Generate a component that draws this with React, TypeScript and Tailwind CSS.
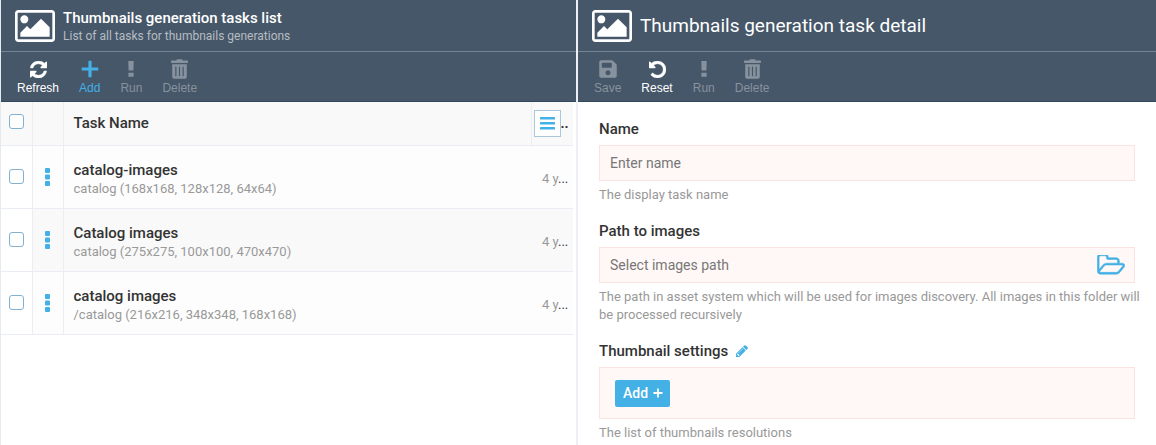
import { useState, type ReactNode } from "react";
import { FaSave, FaTrashAlt } from "react-icons/fa";

const PictureIcon = () => (
  <svg viewBox="-64 128 1920 1536" className="h-8 w-10 shrink-0" fill="currentColor" aria-hidden="true">
    <path d="M576 576q0 80-56 136t-136 56-136-56-56-136 56-136 136-56 136 56 56 136zm1024 384v448h-1408v-192l320-320 160 160 512-512zm96-704h-1600q-13 0-22.5 9.5t-9.5 22.5v1216q0 13 9.5 22.5t22.5 9.5h1600q13 0 22.5-9.5t9.5-22.5v-1216q0-13-9.5-22.5t-22.5-9.5zm160 32v1216q0 66-47 113t-113 47h-1600q-66 0-113-47t-47-113v-1216q0-66 47-113t113-47h1600q66 0 113 47t47 113z" />
  </svg>
);

const RefreshIcon = () => (
  <svg viewBox="128 128 1536 1536" className="size-[17px]" fill="currentColor" stroke="currentColor" strokeWidth="40" aria-hidden="true">
    <path d="M1639 1056q0 5-1 7-64 268-268 434.5t-478 166.5q-146 0-282.5-55t-243.5-157l-129 129q-19 19-45 19t-45-19-19-45v-448q0-26 19-45t45-19h448q26 0 45 19t19 45-19 45l-137 137q71 66 161 102t187 36q134 0 250-65t186-179q11-17 53-117 8-23 30-23h192q13 0 22.5 9.5t9.500 22.500zm25-800v448q0 26-19 45t-45 19h-448q-26 0-45-19t-19-45 19-45l138-138q-148-137-349-137-134 0-250 65t-186 179q-11 17-53 117-8 23-30 23h-199q-13 0-22.500-9.500t-9.500-22.500v-7q65-268 270-434.500t480-166.500q146 0 284 55.500t245 156.500l130-129q19-19 45-19t45 19 19 45z" />
  </svg>
);

const UndoIcon = () => (
  <svg viewBox="128 128 1536 1536" className="size-[17px]" fill="currentColor" stroke="currentColor" strokeWidth="40" aria-hidden="true">
    <path d="M1664 896q0 156-61 298t-164 245-245 164-298 61q-172 0-327-72.500t-264-204.500q-7-10-6.500-22.500t8.500-20.500l137-138q10-9 25-9 16 2 23 12 73 95 179 147t225 52q104 0 198.500-40.500t163.500-109.500 109.500-163.500 40.500-198.500-40.500-198.500-109.500-163.500-163.500-109.500-198.500-40.500q-98 0-188 35.500t-160 101.500l137 138q31 30 14 69-17 40-59 40h-448q-26 0-45-19t-19-45v-448q0-42 40-59 39-17 69 14l130 129q107-101 244.500-156.500t284.500-55.500q156 0 298 61t245 164 164 245 61 298z" />
  </svg>
);

const RunIcon = () => (
  <svg viewBox="0 0 6 16" className="h-4 w-[6px]" fill="currentColor" aria-hidden="true">
    <path d="M.3 0h5.400l-.3 9.500h-4.800zM.4 11.800h5.200v4h-5.200z" />
  </svg>
);

const PlusIcon = ({ className }: { className: string }) => (
  <svg viewBox="0 0 18 18" className={className} fill="currentColor" aria-hidden="true">
    <path d="M8 .7h2q.6 0 .6.6v6.100h6.100q.6 0 .6.6v2q0 .6-.6.6h-6.100v6.100q0 .6-.6.6h-2q-.6 0-.6-.6v-6.100h-6.100q-.6 0-.6-.6v-2q0-.6.6-.6h6.100v-6.100q0-.6.6-.6z" />
  </svg>
);

const FolderIcon = () => (
  <svg viewBox="44 236 1949 1320" className="h-5 w-7" fill="currentColor" stroke="currentColor" strokeWidth="36" aria-hidden="true">
    <path d="M1845 931q0-35-53-35h-1088q-40 0-85.5 21.500t-71.500 52.500l-294 363q-18 24-18 40 0 35 53 35h1088q40 0 86-22t71-53l294-363q18-22 18-39zm-1141-163h768v-160q0-40-28-68t-68-28h-576q-40 0-68-28t-28-68v-64q0-40-28-68t-68-28h-320q-40 0-68 28t-28 68v853l256-315q44-53 116-87.500t140-34.500zm1269 163q0 62-46 120l-295 363q-43 53-116 87.500t-140 34.500h-1088q-92 0-158-66t-66-158v-960q0-92 66-158t158-66h320q92 0 158 66t66 158v32h544q92 0 158 66t66 158v160h192q54 0 99 24.500t67 70.500q15 32 15 68z" />
  </svg>
);

const PencilIcon = () => (
  <svg viewBox="128 128 1536 1536" className="size-3" fill="currentColor" aria-hidden="true">
    <path d="M491 1536l91-91-235-235-91 91v107h128v128h107zm523-928q0-22-22-22-10 0-17 7l-542 542q-7 7-7 17 0 22 22 22 10 0 17-7l542-542q7-7 7-17zm-54-192l416 416-832 832h-416v-416zm683 96q0 53-37 90l-166 166-416-416 166-165q36-38 90-38 53 0 91 38l235 234q37 39 37 91z" />
  </svg>
);

const DotsIcon = () => (
  <svg viewBox="0 0 5 18" className="h-[18px] w-[5px]" fill="currentColor" aria-hidden="true">
    <rect width="5" height="5" rx="1" />
    <rect y="6.500" width="5" height="5" rx="1" />
    <rect y="13" width="5" height="5" rx="1" />
  </svg>
);

const MenuIcon = () => (
  <svg viewBox="0 0 15 13" className="h-[13px] w-[15px]" fill="currentColor" aria-hidden="true">
    <rect width="15" height="2.500" rx="0.500" />
    <rect y="5" width="15" height="2.500" rx="0.500" />
    <rect y="10" width="15" height="2.500" rx="0.500" />
  </svg>
);

type Tone = "normal" | "accent" | "disabled";
const tones: Record<Tone, string> = {
  normal: "text-white",
  accent: "text-[#43b0e6]",
  disabled: "text-[#87929e]",
};

function Tool({ label, icon, tone }: { label: string; icon: ReactNode; tone: Tone }) {
  return (
    <button
      type="button"
      disabled={tone === "disabled"}
      className={`flex flex-col items-center gap-px font-['Liberation_Sans',sans-serif] text-[12px] leading-4 ${tones[tone]}`}
    >
      <span className="flex h-5 items-center justify-center">{icon}</span>
      {label}
    </button>
  );
}

const deleteIcon = <FaTrashAlt className="h-5 w-[17px]" />;

function BladeHeader({ children, tools }: { children: ReactNode; tools: ReactNode }) {
  return (
    <header className="border-b border-[#34495e] bg-[#465769] text-white">
      <div className="flex h-[52px] items-center gap-2 border-b border-[#75828f] px-[14px]">
        <PictureIcon />
        {children}
      </div>
      <div className="flex h-[49px] items-start gap-5 px-4 pt-[7px]">{tools}</div>
    </header>
  );
}

function TickBox({ label }: { label: string }) {
  const [checked, setChecked] = useState(false);
  return (
    <input
      type="checkbox"
      aria-label={label}
      checked={checked}
      onChange={(e) => setChecked(e.target.checked)}
      className="block size-[15px] appearance-none rounded-[3px] border border-[#83b1d0] bg-white checked:bg-[#43b0e6]"
    />
  );
}

const tasks = [
  { name: "catalog-images", path: "catalog (168x168, 128x128, 64x64)" },
  { name: "Catalog images", path: "catalog (275x275, 100x100, 470x470)" },
  { name: "catalog images", path: "/catalog (216x216, 348x348, 168x168)" },
];

function TaskList() {
  return (
    <section className="flex min-w-0 flex-1 flex-col border-l border-[#e5eaf0]">
      <BladeHeader
        tools={
          <>
            <Tool label="Refresh" tone="normal" icon={<RefreshIcon />} />
            <Tool label="Add" tone="accent" icon={<PlusIcon className="size-[18px]" />} />
            <Tool label="Run" tone="disabled" icon={<RunIcon />} />
            <Tool label="Delete" tone="disabled" icon={deleteIcon} />
          </>
        }
      >
        <div>
          <h1 className="text-[15px] leading-5 font-medium">Thumbnails generation tasks list</h1>
          <p className="text-[12px] leading-4 text-[#b5bcc3]">List of all tasks for thumbnails generations</p>
        </div>
      </BladeHeader>
      <div className="pr-[3px]">
        <table className="w-full table-fixed border-collapse text-left">
          <thead className="bg-[#f9f9f9]">
            <tr className="h-[43px] border-b border-[#eaedf3]">
              <th className="w-[31px] border-r border-[#eaedf3] pb-1 pl-2"><TickBox label="Select all tasks" /></th>
              <th className="w-[31px] border-r border-[#eaedf3]" aria-label="Actions" />
              <th className="px-[10px] text-[15px] font-medium">Task Name</th>
              <th className="w-[42px] border-l border-[#eaedf3]">
                <div className="flex items-center pl-[2px]">
                  <button type="button" aria-label="Choose columns" className="flex size-[27px] shrink-0 items-center justify-center border border-[#a9c8dd] bg-white text-[#43b0e6]">
                    <MenuIcon />
                  </button>
                  <span className="text-[14px] font-bold">..</span>
                </div>
              </th>
            </tr>
          </thead>
          <tbody>
            {tasks.map((task) => (
              <tr key={task.name} className="h-[63px] border-b border-[#eaedf3] bg-[#fdfdfd] even:bg-[#f9f9f9]">
                <td className="border-r border-[#eaedf3] bg-white pl-2"><TickBox label={`Select ${task.name}`} /></td>
                <td className="border-r border-[#eaedf3] text-center text-[#43b0e6]">
                  <button type="button" aria-label={`Actions for ${task.name}`} className="align-middle"><DotsIcon /></button>
                </td>
                <td className="px-[10px] pt-[5px]">
                  <div className="text-[15px] leading-5 font-medium">{task.name}</div>
                  <div className="text-[13px] leading-[18px] text-[#999]">{task.path}</div>
                </td>
                <td className="pt-1 pl-[11px] text-[13px] text-[#333]"><span className="text-[#999]">4 y</span>...</td>
              </tr>
            ))}
          </tbody>
        </table>
      </div>
    </section>
  );
}

const hint = "mt-[5px] -mr-3 text-[13px] leading-[18px] text-[#999]";
const label = "text-[15px] leading-5 font-medium";
const box = "mt-[6px] border border-[#fbe3e0] bg-[#fff8f6]";

function TaskDetail() {
  const [name, setName] = useState("");
  const [path, setPath] = useState("");
  return (
    <section className="flex w-[calc(50%+2px)] shrink-0 flex-col border-l-2 border-[#edf1f5]">
      <BladeHeader
        tools={
          <>
            <Tool label="Save" tone="disabled" icon={<FaSave className="size-5" />} />
            <Tool label="Reset" tone="normal" icon={<UndoIcon />} />
            <Tool label="Run" tone="disabled" icon={<RunIcon />} />
            <Tool label="Delete" tone="disabled" icon={deleteIcon} />
          </>
        }
      >
        <h1 className="text-[19px] leading-7">Thumbnails generation task detail</h1>
      </BladeHeader>
      <form className="flex flex-col gap-[17px] px-[21px] pt-[17px]" onSubmit={(e) => e.preventDefault()}>
        <div>
          <label htmlFor="name" className={`block ${label}`}>Name</label>
          <input id="name" value={name} onChange={(e) => setName(e.target.value)} placeholder="Enter name" className={`${box} block h-9 w-full px-[10px] text-[14px] placeholder:text-[#777]`} />
          <p className={hint}>The display task name</p>
        </div>
        <div>
          <label htmlFor="path" className={`block ${label}`}>Path to images</label>
          <div className={`${box} flex h-9 items-center pr-[9px]`}>
            <input id="path" value={path} onChange={(e) => setPath(e.target.value)} placeholder="Select images path" className="min-w-0 flex-1 bg-transparent px-[10px] text-[14px] placeholder:text-[#777]" />
            <button type="button" aria-label="Browse folders" className="text-[#43b0e6]"><FolderIcon /></button>
          </div>
          <p className={hint}>The path in asset system which will be used for images discovery. All images in this folder will be processed recursively</p>
        </div>
        <div>
          <div className={`flex items-center gap-2 ${label}`}>
            Thumbnail settings
            <button type="button" aria-label="Edit thumbnail settings" className="text-[#43b0e6]"><PencilIcon /></button>
          </div>
          <div className={`${box} flex h-[52px] items-center px-[15px]`}>
            <button type="button" className="flex h-[27px] items-center gap-[5px] rounded-[2px] bg-[#43b0e6] pr-[7px] pl-2 text-[14px] font-medium text-white">
              Add <PlusIcon className="size-[10px]" />
            </button>
          </div>
          <p className={hint}>The list of thumbnails resolutions</p>
        </div>
      </form>
    </section>
  );
}

export default function App() {
  return (
    <main className="flex min-h-screen bg-white font-[Roboto,sans-serif] text-[#333]">
      <TaskList />
      <TaskDetail />
    </main>
  );
}
